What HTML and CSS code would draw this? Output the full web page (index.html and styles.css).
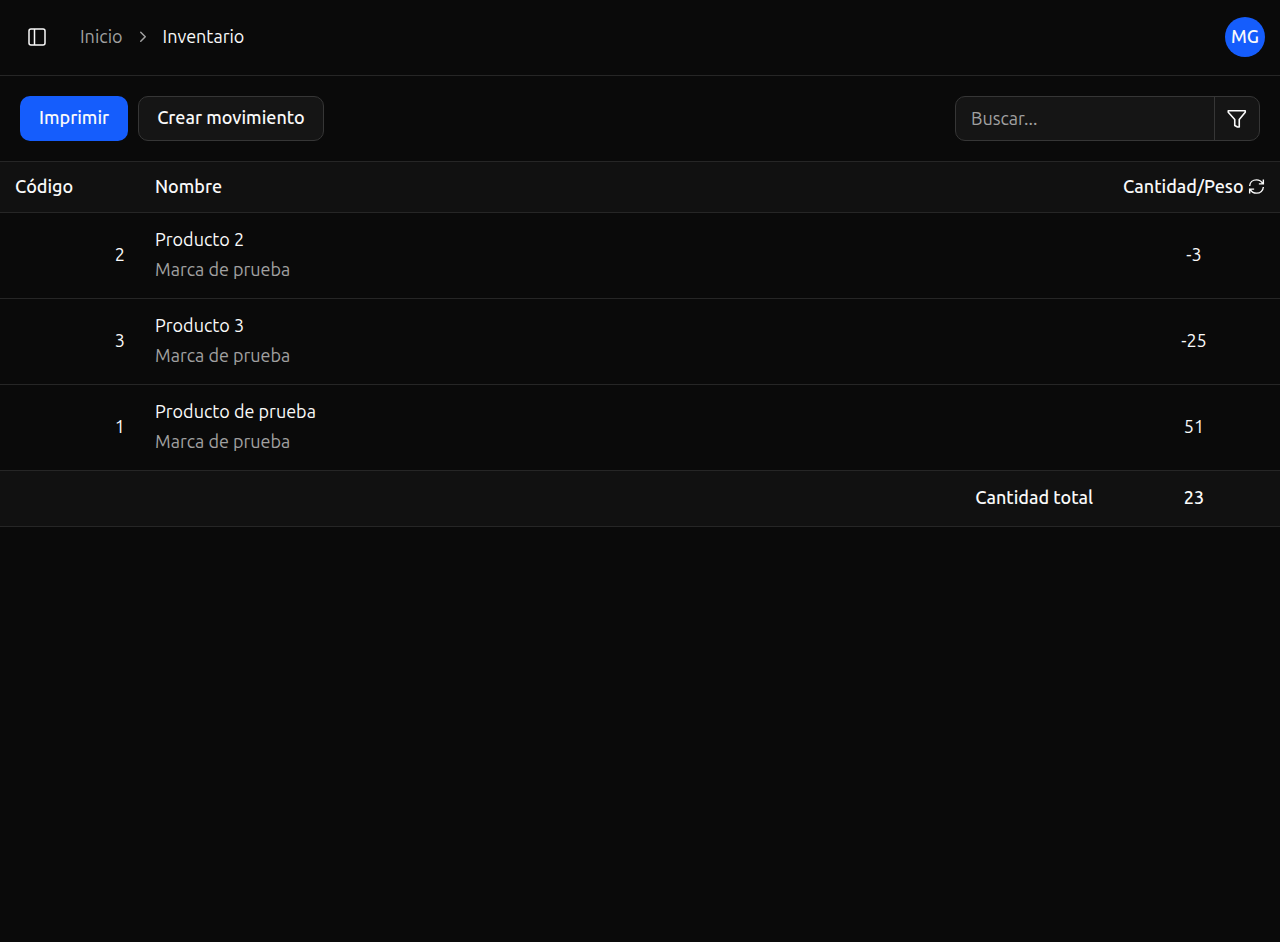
FILE: index.html
```html
<!DOCTYPE html>
<html lang="es">
<head>
<meta charset="UTF-8">
<meta name="viewport" content="width=device-width, initial-scale=1.0">
<title>Inventario</title>
<link rel="stylesheet" href="styles.css">
</head>
<body>
<header class="topbar">
    <button type="button" class="sidebar-toggle" aria-label="Menú">
        <svg width="20" height="20" viewBox="0 0 20 20" fill="none" stroke="currentColor" stroke-width="1.5">
            <rect x="2" y="2" width="16" height="16" rx="2"/>
            <path d="M7.5 2v16"/>
        </svg>
    </button>
    <nav class="breadcrumb">
        <a href="#">Inicio</a>
        <svg width="18" height="18" viewBox="0 0 24 24" fill="none" stroke="currentColor" stroke-width="2" stroke-linecap="round" stroke-linejoin="round">
            <path d="m9 19 6-6-6-6"/>
        </svg>
        <span class="current">Inventario</span>
    </nav>
    <button type="button" class="avatar">MG</button>
</header>

<main>
    <div class="toolbar">
        <button type="button" class="btn btn-primary">Imprimir</button>
        <button type="button" class="btn btn-outline">Crear movimiento</button>
        <div class="search">
            <input type="text" placeholder="Buscar..." aria-label="Buscar">
            <button type="button" class="filter" aria-label="Filtrar">
                <svg width="20" height="20" viewBox="0 0 20 20" fill="none" stroke="currentColor" stroke-width="1.6" stroke-linejoin="round">
                    <path d="M1.25 1.75h17v1.5L12.25 10.5v7.5h-1.75L7.75 16.5v-6L1.25 3.25z"/>
                </svg>
            </button>
        </div>
    </div>

    <table class="inventory">
        <thead>
            <tr>
                <th class="code">Código</th>
                <th>Nombre</th>
                <th class="amount">
                    <div class="amount-head">
                        Cantidad/Peso
                        <button type="button" class="refresh" aria-label="Actualizar">
                            <svg width="17" height="17" viewBox="0 0 18 18" fill="none" stroke="currentColor" stroke-width="1.5">
                                <path d="M1.75 8.5C2 4.75 5 2 9 2c2.75 0 5 1.25 6.5 3.75M16.25 1.5v4.75H11.5"/>
                                <path d="M16.25 9.5C16 13.25 13 16 9 16c-2.75 0-5-1.25-6.5-3.75M1.75 16.5v-4.75H6.5"/>
                            </svg>
                        </button>
                    </div>
                </th>
            </tr>
        </thead>
        <tbody>
            <tr>
                <td class="code">2</td>
                <td>Producto 2<div class="brand">Marca de prueba</div></td>
                <td class="amount">-3</td>
            </tr>
            <tr>
                <td class="code">3</td>
                <td>Producto 3<div class="brand">Marca de prueba</div></td>
                <td class="amount">-25</td>
            </tr>
            <tr>
                <td class="code">1</td>
                <td>Producto de prueba<div class="brand">Marca de prueba</div></td>
                <td class="amount">51</td>
            </tr>
        </tbody>
        <tfoot>
            <tr>
                <td colspan="2" class="total-label">Cantidad total</td>
                <td class="amount">23</td>
            </tr>
        </tfoot>
    </table>
</main>
</body>
</html>
```
FILE: styles.css
```css
* {
    box-sizing: border-box;
}

body {
    margin: 0;
    background-color: #0a0a0a;
    color: #fafafa;
    font-family: Ubuntu, "Noto Sans", sans-serif;
    font-size: 18px;
    line-height: 30px;
}

button, input {
    font: inherit;
    color: inherit;
}

button {
    padding: 0;
    border: none;
    background: none;
    cursor: pointer;
}

svg {
    display: block;
}

/* header */
.topbar {
    display: flex;
    align-items: center;
    height: 76px;
    padding: 0 15px 2px;
    border-bottom: 1px solid #262626;
}

.sidebar-toggle {
    display: flex;
    align-items: center;
    justify-content: center;
    width: 44px;
    height: 44px;
}

.breadcrumb {
    display: flex;
    align-items: center;
    gap: 11px;
    margin-left: 21px;
    padding-bottom: 2px;
    color: #a1a1a1;
}

.breadcrumb a {
    color: #a1a1a1;
    text-decoration: none;
}

.breadcrumb .current {
    color: #fafafa;
}

.avatar {
    width: 40px;
    height: 40px;
    margin-left: auto;
    padding-bottom: 2px;
    border-radius: 50%;
    background-color: #155dfc;
    font-weight: 500;
}

/* buttons and search */
.toolbar {
    display: flex;
    gap: 10px;
    padding: 20px;
    border-bottom: 1px solid #262626;
}

.btn {
    height: 45px;
    padding: 0 19px 3px;
    border-radius: 10px;
    font-weight: 500;
}

.btn-primary {
    background-color: #155dfc;
}

.btn-outline {
    padding: 0 18px 3px;
    border: 1px solid #363636;
    background-color: #151515;
}

.search {
    display: flex;
    width: 305px;
    height: 45px;
    margin-left: auto;
    border: 1px solid #363636;
    border-radius: 10px;
    background-color: #151515;
}

.search input {
    flex: 1;
    min-width: 0;
    padding: 0 15px 2px;
    border: none;
    outline: none;
    background: none;
}

.search input::placeholder {
    color: #a1a1a1;
    opacity: 1;
}

.filter {
    display: flex;
    align-items: center;
    justify-content: center;
    width: 45px;
    border-left: 1px solid #363636;
}

/* table */
.inventory {
    width: 100%;
    border-spacing: 0;
}

th, td {
    padding: 11px 15px 14px;
    border-bottom: 1px solid #262626;
    text-align: left;
}

th {
    padding: 9px 15px 11px;
    font-weight: 500;
}

thead, tfoot {
    background-color: #111111;
}

tfoot td {
    font-weight: 500;
}

.code {
    width: 140px;
}

td.code {
    text-align: right;
}

.amount {
    width: 172px;
    text-align: center;
}

.amount-head {
    display: flex;
    align-items: center;
    justify-content: space-between;
    white-space: nowrap;
}

.brand {
    color: #a1a1a1;
}

td.total-label {
    text-align: right;
}
```
